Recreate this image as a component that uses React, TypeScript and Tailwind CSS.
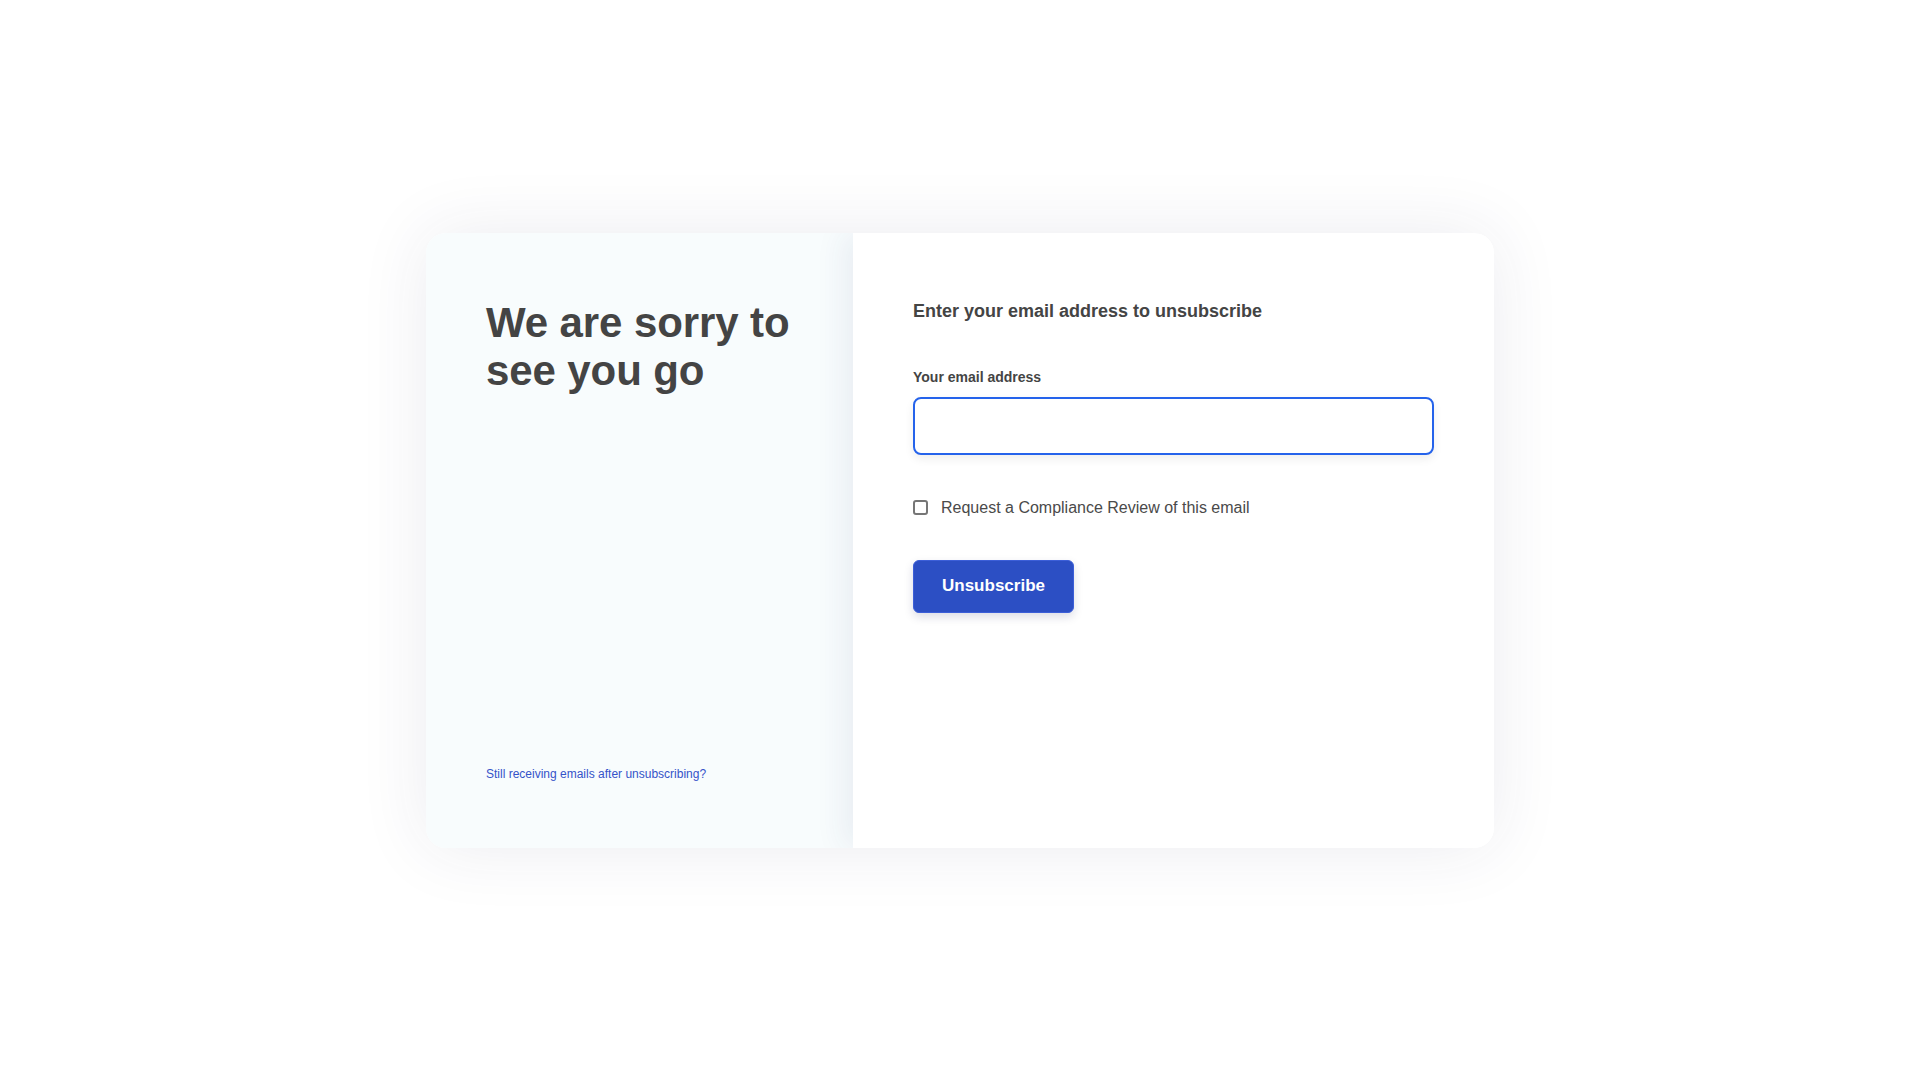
import { useState } from "react";

const App = () => {
  const [email, setEmail] = useState("");
  const [review, setReview] = useState(false);

  return (
    <div className="min-h-screen w-full bg-white flex items-center justify-center font-['Liberation_Sans',Arial,sans-serif]">
      {/* Card */}
      <div className="w-[1068px] h-[615px] flex rounded-[20px] bg-white shadow-[0_0_70px_rgba(40,40,90,0.09)] overflow-hidden">
        {/* Left panel */}
        <div className="w-[427px] shrink-0 bg-[#f8fcfd] flex flex-col justify-between pl-[60px] pr-[30px] pt-[66px] pb-[67px]">
          <h1 className="text-[42px] leading-[48px] font-bold text-[#444444] tracking-[-0.1px]">
            We are sorry to see you go
          </h1>
          <a href="#" className="text-[12px] leading-[14px] text-[#3553c9]">
            Still receiving emails after unsubscribing?
          </a>
        </div>

        {/* Right panel */}
        <div className="relative flex-1 bg-white px-[60px] pt-[65px] shadow-[-10px_0_28px_rgba(40,50,110,0.07)]">
          <h2 className="text-[18px] leading-[27px] font-bold text-[#444444]">
            Enter your email address to unsubscribe
          </h2>

          <form className="mt-[43px]" onSubmit={(e) => e.preventDefault()}>
            <label
              htmlFor="email"
              className="block text-[14px] leading-[18px] font-bold text-[#444444]"
            >
              Your email address
            </label>
            <input
              id="email"
              type="email"
              autoFocus
              value={email}
              onChange={(e) => setEmail(e.target.value)}
              className="mt-[11px] block w-full h-[58px] rounded-[8px] border-2 border-[#2563eb] bg-white px-[14px] text-[16px] text-[#333] caret-[#333] outline-none shadow-[0_4px_10px_rgba(0,0,0,0.07)]"
            />

            <label className="mt-[43px] flex items-center gap-[13px] cursor-pointer">
              <span
                onClick={() => setReview(!review)}
                className={`w-[15px] h-[15px] rounded-[3px] border-2 border-[#767676] flex items-center justify-center ${
                  review ? "bg-[#2c4fc4] border-[#2c4fc4]" : "bg-white"
                }`}
              >
                {review && (
                  <svg viewBox="0 0 12 12" className="w-[10px] h-[10px]">
                    <path d="M2 6.5l2.5 2.5L10 3" fill="none" stroke="white" strokeWidth="2" />
                  </svg>
                )}
              </span>
              <span className="text-[16px] leading-[20px] text-[#4a4a4a]">
                Request a Compliance Review of this email
              </span>
            </label>

            <button
              type="submit"
              className="mt-[42px] h-[53px] px-[28px] rounded-[6px] bg-[#2c4fc4] border border-[#3c5fd8] text-white text-[17px] font-bold shadow-[0_4px_10px_rgba(20,30,80,0.15)]"
            >
              Unsubscribe
            </button>
          </form>
        </div>
      </div>
    </div>
  );
};

export default App;
